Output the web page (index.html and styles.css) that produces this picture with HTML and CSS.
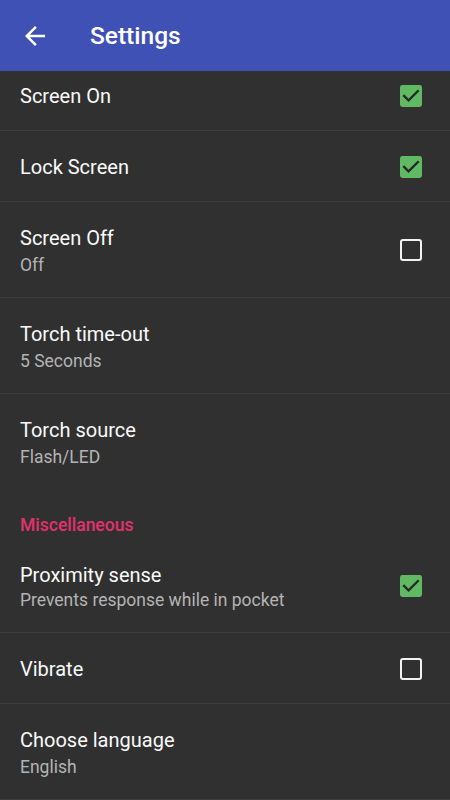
FILE: index.html
```html
<!DOCTYPE html>
<html lang="en">
<head>
<meta charset="utf-8">
<title>Settings</title>
<link rel="stylesheet" href="styles.css">
</head>
<body>
<div class="app">
  <header class="toolbar">
    <span class="nav-icon">
      <svg width="30" height="30" viewBox="0 0 24 24"><path fill="#fff" d="M20 11H7.83l5.59-5.59L12 4l-8 8 8 8 1.41-1.41L7.83 13H20v-2z"/></svg>
    </span>
    <h1 class="toolbar-title">Settings</h1>
  </header>
  <main class="list">
    <div class="pref single">
      <div class="pref-text"><div class="pref-title">Screen On</div></div>
      <span class="check on"><svg width="22" height="22" viewBox="3 3 18 18"><rect x="3" y="3" width="18" height="18" rx="2" fill="#5fba63"/><path fill="#262a26" d="M10 17l-5-5 1.41-1.41L10 14.17l7.59-7.59L19 8l-9 9z"/></svg></span>
    </div>
    <div class="pref single">
      <div class="pref-text"><div class="pref-title">Lock Screen</div></div>
      <span class="check on"><svg width="22" height="22" viewBox="3 3 18 18"><rect x="3" y="3" width="18" height="18" rx="2" fill="#5fba63"/><path fill="#262a26" d="M10 17l-5-5 1.41-1.41L10 14.17l7.59-7.59L19 8l-9 9z"/></svg></span>
    </div>
    <div class="pref double">
      <div class="pref-text"><div class="pref-title">Screen Off</div><div class="pref-summary">Off</div></div>
      <span class="check off"></span>
    </div>
    <div class="pref double">
      <div class="pref-text"><div class="pref-title">Torch time-out</div><div class="pref-summary">5 Seconds</div></div>
    </div>
    <div class="pref double last">
      <div class="pref-text"><div class="pref-title">Torch source</div><div class="pref-summary">Flash/LED</div></div>
    </div>
    <div class="category">Miscellaneous</div>
    <div class="pref double tight">
      <div class="pref-text"><div class="pref-title">Proximity sense</div><div class="pref-summary">Prevents response while in pocket</div></div>
      <span class="check on"><svg width="22" height="22" viewBox="3 3 18 18"><rect x="3" y="3" width="18" height="18" rx="2" fill="#5fba63"/><path fill="#262a26" d="M10 17l-5-5 1.41-1.41L10 14.17l7.59-7.59L19 8l-9 9z"/></svg></span>
    </div>
    <div class="pref single">
      <div class="pref-text"><div class="pref-title">Vibrate</div></div>
      <span class="check off"></span>
    </div>
    <div class="pref double">
      <div class="pref-text"><div class="pref-title">Choose language</div><div class="pref-summary">English</div></div>
    </div>
  </main>
</div>
</body>
</html>
```
FILE: styles.css
```css
* { box-sizing: border-box; }
html, body {
  margin: 0;
  padding: 0;
  background: #303030;
  font-family: Roboto, "Noto Sans", "Liberation Sans", sans-serif;
}
.app {
  width: 450px;
  height: 800px;
  overflow: hidden;
  background: #303030;
}
.toolbar {
  position: relative;
  z-index: 2;
  height: 71px;
  background: #3f51b5;
  display: flex;
  align-items: center;
  padding-left: 20px;
  padding-top: 1px;
}
.nav-icon {
  width: 30px;
  height: 30px;
  display: flex;
}
.toolbar-title {
  margin: 0 0 0 40px;
  color: #fff;
  font-size: 24.5px;
  font-weight: 500;
  line-height: 30px;
}
.list {
  margin-top: -11px;
  display: flex;
  flex-direction: column;
}
.pref {
  display: flex;
  align-items: center;
  padding: 0 28px 0 20px;
  border-bottom: 1px solid #3d3d3d;
}
.pref.last { border-bottom: none; }
.pref.single {
  height: 71px;
  padding-top: 1px;
}
.pref.double {
  height: 96px;
  padding-top: 2px;
}
.pref.double.last { height: 95px; }
.pref.double.tight { height: 94px; padding-top: 2px; }
.pref-text {
  flex: 1;
  min-width: 0;
}
.pref-title {
  color: #fafafa;
  font-size: 20px;
  line-height: 26px;
}
.pref-summary {
  color: #b4b4b4;
  font-size: 17.5px;
  line-height: 22px;
  margin-top: 3px;
}
.pref.tight .pref-summary { margin-top: 1px; }
.check {
  width: 22px;
  height: 22px;
  flex: none;
  display: flex;
}
.pref.double .check { margin-top: -2px; }
.check.off {
  border: 2.5px solid #f2f2f2;
  border-radius: 3px;
}
.category {
  height: 50px;
  padding: 25px 20px 0;
  color: #e2326c;
  font-size: 17.5px;
  font-weight: 500;
  line-height: 22px;
}
```
